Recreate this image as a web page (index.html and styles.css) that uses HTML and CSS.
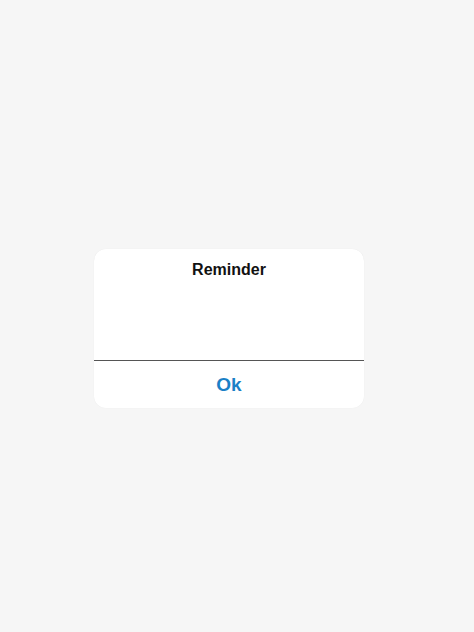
FILE: index.html
```html
<!DOCTYPE html>
<html lang="en">

<head>
    <meta charset="UTF-8">
    <meta name="viewport" content="width=device-width, initial-scale=1.0">
    <title>Reminder</title>
    <link rel="stylesheet" href="styles.css">
</head>

<body>
    <div class="page">
        <div class="alert">
            <div class="alert-body">
                <h2 class="alert-title">Reminder</h2>
            </div>
            <a href="javascript:;" class="alert-btn">Ok</a>
        </div>
    </div>
</body>

</html>
```

FILE: styles.css
```css
* {
    margin: 0;
    padding: 0;
    box-sizing: border-box;
}

body {
    background-color: #f6f6f6;
    font-family: "Liberation Sans", Arial, sans-serif;
}

.page {
    height: 632px;
    display: flex;
    padding-top: 249px;
    padding-left: 94px;
}

.alert {
    width: 270px;
    height: 159px;
    background-color: #fff;
    border-radius: 12px;
    box-shadow: 0 0 1px rgba(0, 0, 0, 0.08);
    display: flex;
    flex-direction: column;
    overflow: hidden;
}

.alert-body {
    height: 112px;
    border-bottom: 1px solid #555;
    padding-top: 12px;
    text-align: center;
}

.alert-title {
    font-size: 16px;
    font-weight: bold;
    color: #111;
}

.alert-btn {
    flex: 1;
    display: flex;
    align-items: center;
    justify-content: center;
    text-decoration: none;
    color: #1a80c6;
    font-size: 19px;
    font-weight: bold;
}
```
